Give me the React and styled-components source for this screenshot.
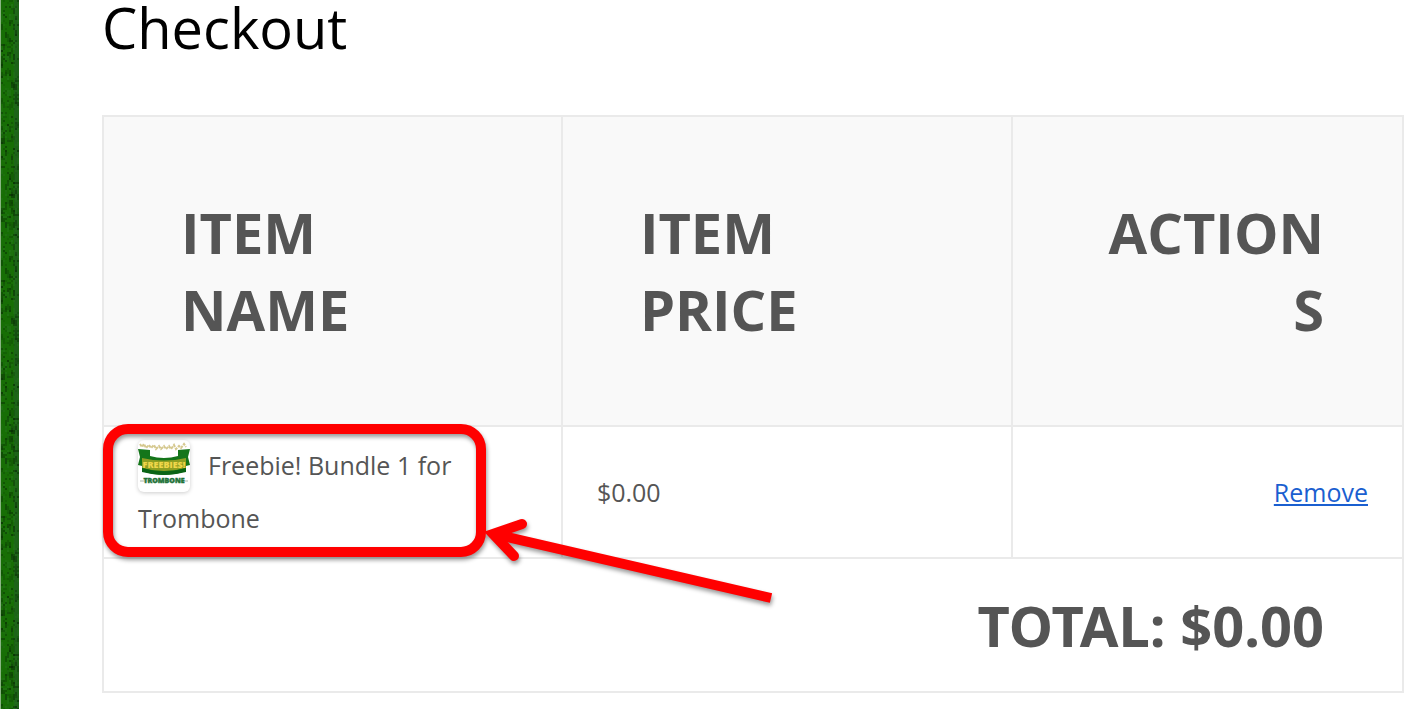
import React from "react";
import styled, { createGlobalStyle } from "styled-components";

const GlobalStyle = createGlobalStyle`
  * { box-sizing: border-box; }
  html, body { margin: 0; background: #fff; }
  body { font-family: "Open Sans", "Noto Sans", sans-serif; color: #555; }
`;

const Page = styled.div`
  display: flex;
  min-height: 100vh;
  background: #fff;
`;

const Strip = styled.aside`
  flex: 0 0 19px;
  background: #176508;
  border-left: 1px solid #8ab583;
`;

const StripArt = styled.svg`
  display: block;
  width: 100%;
  height: 100%;
`;

const Main = styled.main`
  flex: 1;
  min-width: 0;
  padding: 0 20px 16px 83px;
`;

const Title = styled.h1`
  margin: 0 0 60px;
  font-size: 56px;
  font-weight: 400;
  line-height: 55px;
  color: #000;
`;

const CartTable = styled.table`
  width: 100%;
  table-layout: fixed;
  border-collapse: collapse;
`;

const Column = styled.col`
  width: ${(p) => p.$share};
`;

const HeadCell = styled.th`
  padding: 77px 78px 77px 77px;
  border: 2px solid #eaeaea;
  background: #f9f9f9;
  font-size: 56px;
  font-weight: 700;
  line-height: 77px;
  text-align: ${(p) => p.$align || "left"};
  text-transform: uppercase;
  overflow-wrap: anywhere;
`;

const Cell = styled.td`
  padding: 12px 34px 13px;
  border: 2px solid #eaeaea;
  font-size: 25px;
  line-height: 52px;
  text-align: ${(p) => p.$align || "left"};
`;

const TotalCell = styled(HeadCell)`
  padding: 28px 78px 27px;
  background: #fff;
  font-family: "Noto Sans", "Open Sans", sans-serif;
`;

const ItemBox = styled.div`
  position: relative;
`;

const Thumb = styled.svg`
  width: 52px;
  height: 52px;
  margin-right: 18px;
  vertical-align: -17px;
  border-radius: 6px;
  background: #fff;
  box-shadow: 0 1px 4px rgba(0, 0, 0, 0.2);
`;

const ThumbText = styled.text`
  font-family: "Open Sans", sans-serif;
  font-size: ${(p) => p.$size};
  font-weight: 800;
  text-anchor: middle;
`;

const RemoveLink = styled.a`
  color: #1a5fd0;
  text-decoration: underline;
`;

const Callout = styled.svg`
  position: absolute;
  top: -20px;
  left: -40px;
  width: 700px;
  height: 200px;
  pointer-events: none;
  filter: drop-shadow(1px 3px 2px rgba(0, 0, 0, 0.4));
`;

const TILE = 236;

function weave() {
  const marks = [];
  let seed = 71;
  const next = () => {
    seed = (seed * 16807) % 2147483647;
    return seed / 2147483647;
  };
  for (let i = 0; i < 400; i += 1) {
    const tall = next() > 0.75;
    marks.push({
      x: Math.floor(next() * 9) * 2,
      y: Math.floor(next() * (TILE / 2)) * 2,
      w: next() > 0.9 ? 4 : 2,
      h: tall ? 6 : 2,
      fill: next() > 0.65 ? "#23751a" : "#062c03",
      opacity: 0.1 + next() * 0.45,
    });
  }
  return marks;
}

const MARKS = weave();

function FabricStrip() {
  return (
    <Strip aria-hidden="true">
      <StripArt>
        <defs>
          <pattern id="fabric" width="18" height={TILE} patternUnits="userSpaceOnUse">
            <rect width="18" height={TILE} fill="#176e05" />
            <rect x="13" width="5" height={TILE} fill="#1d6418" />
            {MARKS.map((m, i) => (
              <rect key={i} x={m.x} y={m.y} width={m.w} height={m.h} fill={m.fill} opacity={m.opacity} />
            ))}
          </pattern>
        </defs>
        <rect width="100%" height="100%" fill="url(#fabric)" />
      </StripArt>
    </Strip>
  );
}

function BundleThumb() {
  return (
    <Thumb viewBox="0 0 52 52" aria-hidden="true">
      <path
        d="M2 4l2 3 2-3 2 4 3-3 2 3 3-3 2 4 3-3 2 3 3-3 2 3 3-3 2 3 3-4 2 4 3-3 2 2 3-4 2 3"
        fill="none"
        stroke="#c3b160"
        strokeWidth="2"
        strokeDasharray="3 1"
        opacity="0.7"
      />
      <path d="M0 9l12 1v6q14 4 28 0v-6l12-1-2 8 2 8-4 1v5q-22 8-44 0v-5l-4-1 2-8z" fill="#14751a" />
      <path d="M4 18q22 5 44 0v10q-22 6-44 0z" fill="#8f9f22" />
      <ThumbText x="26" y="28" $size="9px" fill="#f0d64a">FREEBIES!</ThumbText>
      <path d="M4 28q22 7 44 0v4q-22 6-44 0z" fill="#0a6415" />
      <path d="M2 41h48" stroke="#b9c4b9" strokeWidth="2" opacity="0.6" />
      <ThumbText x="26" y="43" $size="7px" fill="#217338" stroke="#217338" strokeWidth="0.4">TROMBONE</ThumbText>
    </Thumb>
  );
}

function ItemCallout() {
  return (
    <Callout viewBox="0 0 700 200" aria-hidden="true">
      <g fill="none" stroke="#ff0000" strokeWidth="10">
        <rect x="10" y="10" width="373" height="123" rx="20" />
        <path d="M396 115L673 179" />
        <path d="M424 105L395 115L416 137" strokeLinecap="round" strokeLinejoin="miter" />
      </g>
    </Callout>
  );
}

export default function App() {
  return (
    <>
      <GlobalStyle />
      <Page>
        <FabricStrip />
        <Main>
          <Title>Checkout</Title>
          <CartTable>
            <colgroup>
              <Column $share="35.3%" />
              <Column $share="34.6%" />
              <Column $share="30.1%" />
            </colgroup>
            <thead>
              <tr>
                <HeadCell scope="col">Item Name</HeadCell>
                <HeadCell scope="col">Item Price</HeadCell>
                <HeadCell scope="col" $align="right">Actions</HeadCell>
              </tr>
            </thead>
            <tbody>
              <tr>
                <Cell>
                  <ItemBox>
                    <BundleThumb />
                    Freebie! Bundle 1 for Trombone
                    <ItemCallout />
                  </ItemBox>
                </Cell>
                <Cell>$0.00</Cell>
                <Cell $align="right">
                  <RemoveLink href="#remove">Remove</RemoveLink>
                </Cell>
              </tr>
            </tbody>
            <tfoot>
              <tr>
                <TotalCell colSpan={3} $align="right">Total: $0.00</TotalCell>
              </tr>
            </tfoot>
          </CartTable>
        </Main>
      </Page>
    </>
  );
}
